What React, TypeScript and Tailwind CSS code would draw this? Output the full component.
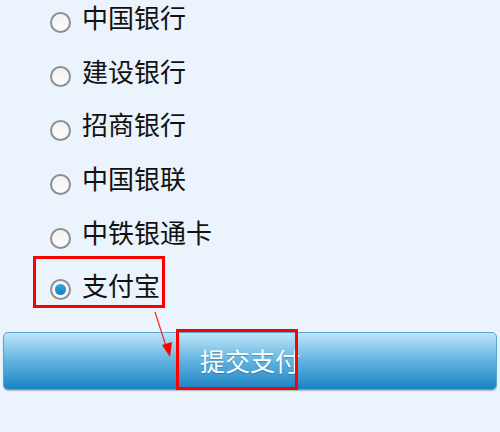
import * as React from "react"

const banks = ["中国银行", "建设银行", "招商银行", "中国银联", "中铁银通卡"]

function Radio({ checked = false }: { checked?: boolean }) {
  return (
    <span className="flex h-[21px] w-[21px] shrink-0 items-center justify-center rounded-full border-2 border-[#8f8f8f] bg-gradient-to-b from-[#f2f2f2] to-[#fdfdfd]">
      {checked && <span className="h-[11px] w-[11px] rounded-full bg-gradient-to-b from-[#2aa6e0] to-[#0f86c6]" />}
    </span>
  )
}

export default function App() {
  return (
    <div
      className="relative h-[432px] w-[500px] overflow-hidden bg-[#ebf3fc]"
      style={{ fontFamily: '"Noto Sans CJK SC", "Noto Sans", sans-serif' }}
    >
      {/* Bank list */}
      <div className="-mt-[10px] flex flex-col">
        {banks.map((name) => (
          <div key={name} className="flex h-[53.8px] items-center pl-[50px]">
            <span className="mt-[12px]">
              <Radio />
            </span>
            <span className="ml-[11px] text-[26px] leading-none text-[#111]">{name}</span>
          </div>
        ))}

        {/* Selected row, marked */}
        <div className="flex h-[53.8px] items-center">
          <div className="-mt-[8px] ml-[33px] flex h-[52px] w-[132px] items-center border-[3px] border-[#ff0000] pl-[14px] pt-[6px]">
            <span className="mt-[10px]">
              <Radio checked />
            </span>
            <span className="ml-[11px] text-[26px] leading-none text-[#111]">支付宝</span>
          </div>
        </div>
      </div>

      {/* Submit button */}
      <div className="relative mx-[3px] mt-[19px] flex h-[58px] items-center justify-center rounded-[5px] border border-[#5aa5cf] bg-gradient-to-b from-[#bde6f8] via-[#5fb3e0] to-[#1583c3] shadow-[0_1px_1px_rgba(0,0,0,0.25)]">
        <span className="text-[25px] leading-none text-white [text-shadow:0_1px_1px_rgba(0,0,0,0.25)]">提交支付</span>
        <div className="absolute left-[172px] top-[-4px] h-[61px] w-[122px] border-[3px] border-[#ff0000]" />
      </div>

      {/* Annotation arrow */}
      <svg className="pointer-events-none absolute left-0 top-0" width="500" height="432" viewBox="0 0 500 432">
        <line x1="155" y1="312" x2="166" y2="346" stroke="#ff2020" strokeWidth="1.2" />
        <polygon points="170,357 162,345 172,342" fill="#ff0000" />
      </svg>
    </div>
  )
}
